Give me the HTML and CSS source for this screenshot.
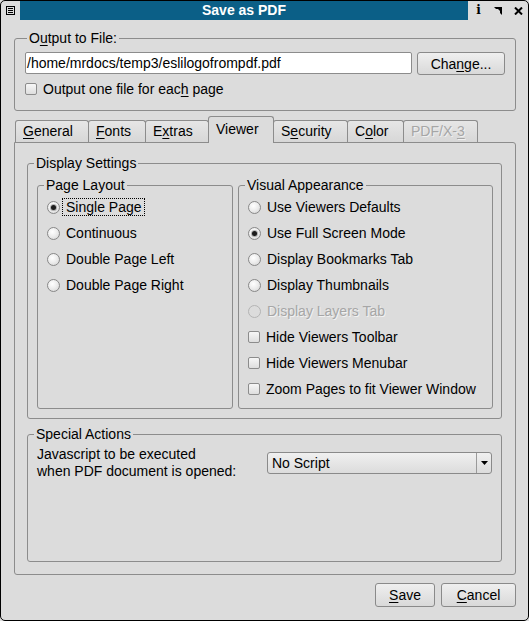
FILE: index.html
```html
<!DOCTYPE html>
<html>
<head>
<meta charset="utf-8">
<title>Save as PDF</title>
<link rel="stylesheet" href="styles.css">
</head>
<body>
<div class="window">
  <div class="titlebar">
    <div class="tb-left">
      <svg width="9" height="9" viewBox="0 0 9 9"><rect x="0.5" y="0.5" width="8" height="8" fill="none" stroke="#000"/><path d="M2 2.5h5M2 4.5h5M2 6.5h5" stroke="#000"/></svg>
    </div>
    <div class="tb-title">Save as PDF</div>
    <div class="tb-right">
      <span class="tb-btn tb-info">i</span>
      <span class="tb-btn"><svg width="8" height="8" viewBox="0 0 8 8"><polygon points="0,0 8,0 8,8 6,6 6,4 4,2 2,2" fill="#000"/></svg></span>
      <span class="tb-btn"><svg width="9" height="8" viewBox="0 0 9 8"><path d="M1 0.5L8 7.5M8 0.5L1 7.5" stroke="#000" stroke-width="2"/></svg></span>
    </div>
  </div>
  <div class="content">
    <fieldset class="group out-group">
      <legend>O<u>u</u>tput to File:</legend>
      <div class="out-body">
        <div class="file-row">
          <div class="lineedit">/home/mrdocs/temp3/eslilogofrompdf.pdf</div>
          <div class="btn btn-change">Cha<u>n</u>ge...</div>
        </div>
        <div class="opt opt-out"><span class="checkbox"></span><span class="lbl">Output one file for eac<u>h</u> page</span></div>
      </div>
    </fieldset>

    <div class="tabbar">
      <div class="tab t-general"><u>G</u>eneral</div>
      <div class="tab t-fonts"><u>F</u>onts</div>
      <div class="tab t-extras">E<u>x</u>tras</div>
      <div class="tab t-viewer sel">Viewer</div>
      <div class="tab t-security">S<u>e</u>curity</div>
      <div class="tab t-color">C<u>o</u>lor</div>
      <div class="tab t-pdfx disabled">PDF/X-<u>3</u></div>
    </div>

    <div class="panel">
      <fieldset class="group display">
        <legend>Display Settings</legend>
        <div class="display-body">
          <fieldset class="group sub layout">
            <legend>Page Layout</legend>
            <div class="sub-body">
              <div class="opt"><span class="radio on"></span><span class="lbl focus">Single Page</span></div>
              <div class="opt"><span class="radio"></span><span class="lbl">Continuous</span></div>
              <div class="opt"><span class="radio"></span><span class="lbl">Double Page Left</span></div>
              <div class="opt"><span class="radio"></span><span class="lbl">Double Page Right</span></div>
            </div>
          </fieldset>
          <fieldset class="group sub visual">
            <legend>Visual Appearance</legend>
            <div class="sub-body">
              <div class="opt"><span class="radio"></span><span class="lbl">Use Viewers Defaults</span></div>
              <div class="opt"><span class="radio on"></span><span class="lbl">Use Full Screen Mode</span></div>
              <div class="opt"><span class="radio"></span><span class="lbl">Display Bookmarks Tab</span></div>
              <div class="opt"><span class="radio"></span><span class="lbl">Display Thumbnails</span></div>
              <div class="opt disabled"><span class="radio"></span><span class="lbl">Display Layers Tab</span></div>
              <div class="opt"><span class="checkbox"></span><span class="lbl">Hide Viewers Toolbar</span></div>
              <div class="opt"><span class="checkbox"></span><span class="lbl">Hide Viewers Menubar</span></div>
              <div class="opt"><span class="checkbox"></span><span class="lbl">Zoom Pages to fit Viewer Window</span></div>
            </div>
          </fieldset>
        </div>
      </fieldset>

      <fieldset class="group special">
        <legend>Special Actions</legend>
        <div class="special-body">
          <div class="js-label">Javascript to be executed<br>when PDF document is opened:</div>
          <div class="combo">
            <span class="combo-text">No Script</span>
            <span class="combo-btn"><svg width="7" height="4" viewBox="0 0 7 4"><polygon points="0,0 7,0 3.5,4" fill="#000"/></svg></span>
          </div>
        </div>
      </fieldset>
    </div>

    <div class="buttons">
      <div class="btn btn-save"><u>S</u>ave</div>
      <div class="btn btn-cancel"><u>C</u>ancel</div>
    </div>
  </div>
</div>
</body>
</html>
```

FILE: styles.css
```css
* { box-sizing: border-box; }
html, body { margin: 0; padding: 0; background: #dcdcdc; }
body {
  font-family: "Liberation Sans", Arial, Helvetica, sans-serif;
  font-size: 14px;
  line-height: 16px;
  color: #000;
}
u { text-decoration: underline; text-decoration-thickness: 1px; text-underline-offset: 2px; }

.window {
  width: 529px;
  height: 621px;
  border: 1px solid #000;
  border-radius: 5px;
  background: #dcdcdc;
  display: flex;
  flex-direction: column;
  overflow: hidden;
}

/* title bar */
.titlebar { flex: none; height: 19px; display: flex; }
.tb-left { width: 19px; padding: 5px 0 0 5px; }
.tb-left svg { display: block; }
.tb-title {
  width: 448px;
  background: #0b5f87;
  color: #fff;
  font-weight: bold;
  text-align: center;
  line-height: 19px;
}
.tb-right { flex: 1; display: flex; padding-left: 1px; }
.tb-btn { width: 19px; display: flex; align-items: center; justify-content: center; }
.tb-btn + .tb-btn { width: 20px; }
.tb-btn svg { display: block; }
.tb-info {
  font-family: "DejaVu Serif", "Liberation Serif", serif;
  font-weight: bold;
  font-size: 12px;
  line-height: 19px;
}

/* content */
.content { flex: 1; display: flex; flex-direction: column; padding: 0 12px 0 13px; }

.group {
  margin: 0;
  padding: 0;
  border: 1px solid #8c8c8c;
  border-radius: 3px;
  min-width: 0;
}
.group > legend {
  padding: 0 2px;
  margin-left: 6px;
  line-height: 16px;
  height: 16px;
}

.out-group { margin-top: 10px; }
.out-group > legend { margin-left: 12px; }
.out-body { padding: 6px 10px 13px 10px; }
.file-row { display: flex; gap: 5px; height: 23px; }
.lineedit {
  flex: 1;
  height: 22px;
  background: #fff;
  border: 1px solid #8c8c8c;
  border-radius: 2px;
  padding: 0 2px 0 1px;
  line-height: 20px;
  white-space: nowrap;
  overflow: hidden;
}
.btn {
  display: flex;
  align-items: center;
  justify-content: center;
  border: 1px solid #8a8a8a;
  border-radius: 3px;
  background: linear-gradient(#efefef, #d9d9d9);
  white-space: nowrap;
}
.btn-change { width: 88px; height: 23px; }

.opt { display: flex; align-items: center; height: 26px; }
.opt-out { height: 16px; margin-top: 6px; }
.checkbox {
  flex: none;
  width: 12px;
  height: 12px;
  border: 1px solid #8c8c8c;
  border-radius: 2px;
  background: linear-gradient(#f7f7f7, #dedede);
  margin-right: 2px;
}
.radio {
  flex: none;
  width: 13px;
  height: 13px;
  border: 1px solid #888;
  border-radius: 50%;
  background: radial-gradient(circle at 40% 35%, #ffffff 0%, #eeeeee 45%, #d2d2d2 100%);
  margin-right: 2px;
  display: flex;
  align-items: center;
  justify-content: center;
}
.radio.on::after {
  content: "";
  width: 5px;
  height: 5px;
  border-radius: 50%;
  background: #1c1c1c;
  box-shadow: 0 0 0 1px rgba(60, 60, 60, 0.35);
}
.lbl {
  border: 1px dotted transparent;
  padding: 0 2px 0 3px;
  line-height: 16px;
  white-space: nowrap;
}
.lbl.focus { border-color: #000; }
.opt.disabled .lbl { color: #a6a6a6; text-shadow: 1px 1px 0 #f2f2f2; }
.opt.disabled .radio { border-color: #b4b4b4; background: #dcdcdc; }

/* tabs */
.tabbar {
  display: flex;
  align-items: flex-end;
  height: 26px;
  margin-top: 5px;
  padding-left: 1px;
  position: relative;
  z-index: 1;
}
.tab {
  height: 22px;
  border: 1px solid #8c8c8c;
  border-bottom: none;
  border-radius: 3px 3px 0 0;
  padding: 2px 0 0 7px;
  background: linear-gradient(#e6e6e6, #d7d7d7);
  margin-left: -1px;
  white-space: nowrap;
}
.tab:first-child { margin-left: 0; }
.tab.sel {
  height: 27px;
  margin-bottom: -1px;
  padding-top: 4px;
  background: #dcdcdc;
  position: relative;
  z-index: 2;
}
.tab.disabled { color: #a6a6a6; text-shadow: 1px 1px 0 #f0f0f0; }
.t-general { width: 74px; }
.t-fonts { width: 58px; }
.t-extras { width: 64px; }
.t-viewer { width: 66px; }
.t-security { width: 75px; }
.t-color { width: 57px; }
.t-pdfx { width: 75px; }

/* panel */
.panel {
  flex: none;
  height: 433px;
  border: 1px solid #8c8c8c;
  border-radius: 0 3px 3px 3px;
  padding: 12px 13px 0 12px;
  display: flex;
  flex-direction: column;
}
.display { height: 264px; }
.display-body { display: flex; gap: 5px; padding: 6px 8px 9px 9px; }
.sub { height: 232px; }
.layout { width: 196px; }
.visual { width: 255px; }
.sub-body { padding: 1px 0 0 9px; }

.special { margin-top: 7px; height: 136px; }
.special-body { display: flex; align-items: center; padding: 4px 9px 0 9px; }
.js-label { line-height: 17px; white-space: nowrap; }
.combo {
  margin-left: auto;
  width: 225px;
  height: 22px;
  display: flex;
  border: 1px solid #8a8a8a;
  border-radius: 3px;
  background: linear-gradient(#f0f0f0, #dcdcdc);
}
.combo-text { flex: 1; padding-left: 4px; line-height: 20px; border-right: 1px solid #9a9a9a; }
.combo-btn { width: 14px; display: flex; align-items: center; justify-content: center; }
.combo-btn svg { display: block; }

/* dialog buttons */
.buttons { display: flex; justify-content: flex-end; gap: 6px; margin-top: 8px; }
.btn-save { width: 60px; height: 24px; }
.btn-cancel { width: 75px; height: 24px; }
```
